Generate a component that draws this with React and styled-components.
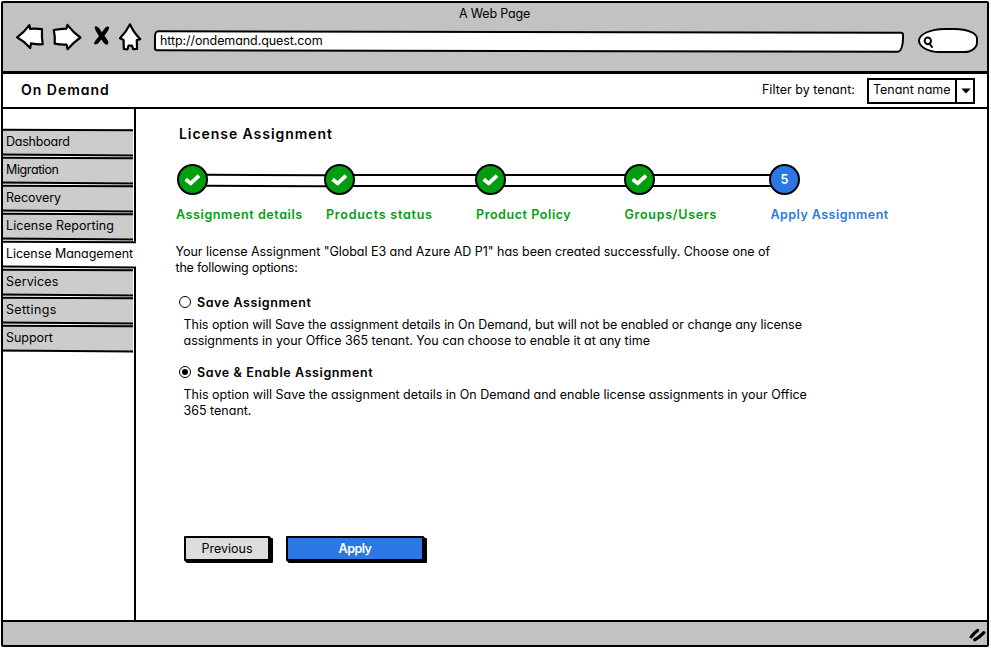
import React, { useState } from "react";
import styled, { createGlobalStyle } from "styled-components";

const GREEN = "#009e0f";
const BLUE = "#2b78e4";
const INK = "#000";

const GlobalStyle = createGlobalStyle`
  *, *::before, *::after { box-sizing: border-box; }
  body { margin: 0; background: #fff; }
  button { font: inherit; color: inherit; letter-spacing: inherit; }
`;

const Page = styled.div`
  width: 991px;
  height: 648px;
  padding: 1px 2px 1px 1px;
  overflow: hidden;
  background: #fff;
  color: ${INK};
  font: 400 12.5px/16px Inter, "Noto Sans", sans-serif;
  font-feature-settings: "cv11" 1;
`;

const BrowserWindow = styled.div`
  display: flex;
  flex-direction: column;
  height: 646px;
  border: 2px solid ${INK};
  border-radius: 2px;
`;

const Text = styled.span`
  display: block;
  white-space: nowrap;
  letter-spacing: ${(p) => p.$ls || 0}px;
`;

/* Browser chrome */
const Chrome = styled.header`
  height: 71px;
  border-bottom: 3px solid ${INK};
  background: #c2c2c2;
`;

const WindowTitle = styled(Text)`
  padding: 3px 0 0 456px;
`;

const ChromeRow = styled.div`
  display: flex;
  align-items: flex-start;
  padding-left: 12px;
`;

const IconButton = styled.button`
  flex: none;
  height: 30px;
  margin: 0 ${(p) => p.$gap}px 0 0;
  padding: 0;
  border: 0;
  background: none;

  svg { display: block; }
`;

const AddressBar = styled.div`
  position: relative;
  width: 750px;
  height: 21px;
  margin: 9px 14px 0 0;
  padding: 2px 0 0 6px;

  &::before {
    content: "";
    position: absolute;
    inset: 0;
    border: 2px solid ${INK};
    border-radius: 4px 3px 6px 3px / 6px 3px 14px 3px;
    background: #fff;
    transform: rotate(0.1deg);
  }

  span { position: relative; }
`;

const SearchBox = styled.div`
  width: 60px;
  height: 25px;
  margin-top: 6px;
  padding: 6px 0 0 3px;
  border: 2px solid ${INK};
  border-radius: 28px 24px 14px 22px / 13px 11px 11px 13px;
  background: #fff;

  svg { display: block; }
`;

/* Application header */
const AppHeader = styled.div`
  display: flex;
  align-items: center;
  height: 33px;
  padding: 0 12px 0 18px;
`;

const Brand = styled(Text)`
  flex: 1;
  font-size: 14px;
  font-weight: 600;
  padding-bottom: 2px;
`;

const FilterLabel = styled(Text)`
  margin-right: 12px;
  padding-bottom: 2px;
`;

const Select = styled.div`
  display: flex;
  width: 108px;
  height: 26px;
  border: 2px solid ${INK};
  background: #fff;
`;

const SelectValue = styled(Text)`
  width: 88px;
  padding: 2px 0 0 4px;
  border-right: 2px solid ${INK};
`;

const Caret = styled.svg`
  display: block;
  margin: 8px 0 0 4px;
`;

/* Main area */
const Main = styled.div`
  display: flex;
  height: 513px;
  border-top: 2px solid ${INK};
`;

const Sidebar = styled.nav`
  display: flex;
  flex-direction: column;
  gap: 1px;
  width: 133px;
  padding-top: 20px;
  border-right: 2px solid ${INK};
`;

const NavItem = styled.a`
  display: block;
  flex: none;
  height: 27px;
  margin-right: ${(p) => (p.$active ? -2 : 1)}px;
  background: ${(p) => (p.$active ? "#fff" : "#cccccc")};

  &::before, &::after {
    content: "";
    display: block;
    height: 2px;
    background: ${INK};
    transform: skewY(0.25deg);
  }
  &::after { transform: skewY(0.5deg); }
`;

const NavLabel = styled(Text)`
  height: 23px;
  padding: 3px 0 0 3px;
`;

const Content = styled.main`
  flex: 1;
  padding: 17px 0 0 40px;
`;

const Heading = styled(Text)`
  margin-left: 3px;
  font-size: 14px;
  font-weight: 600;
`;

const Stepper = styled.ol`
  display: grid;
  grid-template-columns: 147px 151px 149px 145px 130px;
  margin: 22px 0 0 1px;
  padding: 0;
  list-style: none;
`;

const StepTop = styled.div`
  display: flex;
  height: 31px;
`;

const StepCircle = styled.div`
  display: grid;
  place-items: center;
  z-index: 1;
  flex: none;
  width: 31px;
  height: 31px;
  border: 2px solid ${INK};
  border-radius: 50%;
  background: ${(p) => (p.$current ? BLUE : GREEN)};
  color: #fff;
  font-weight: 600;
`;

const Track = styled.div`
  flex: 1;
  height: 13px;
  margin: 10px -2px 0 -2px;
  border: solid ${INK};
  border-width: 2px 0;
  transform: rotate(${(p) => p.$tilt}deg);
`;

const StepLabel = styled(Text)`
  margin: 12px 0 0 ${(p) => p.$shift}px;
  font-weight: 600;
  color: ${(p) => (p.$current ? BLUE : GREEN)};
`;

const Message = styled.div`
  margin: 21px 0 0 -0.5px;
`;

const Option = styled.div`
  margin-top: ${(p) => p.$top}px;
`;

const OptionHead = styled.label`
  display: flex;
  align-items: flex-start;
  gap: 6px;
  height: 16px;
  padding-left: 3px;
  font-weight: 600;
`;

const Radio = styled.span`
  display: grid;
  place-items: center;
  width: 12px;
  height: 12px;
  margin-top: 1px;
  border: 1.4px solid ${INK};
  border-radius: 50%;

  &::after {
    content: "";
    width: 6px;
    height: 6px;
    border-radius: 50%;
    background: ${(p) => (p.$checked ? INK : "transparent")};
  }
`;

const OptionBody = styled.div`
  margin: 6px 0 0 7.5px;
`;

const Actions = styled.div`
  display: flex;
  gap: 16px;
  margin: 117px 0 0 8px;
`;

const ActionButton = styled.button`
  display: flex;
  justify-content: center;
  width: ${(p) => p.$width}px;
  height: 25px;
  padding: 3px 0 0;
  border: 2px solid ${INK};
  border-radius: 1px;
  background: ${(p) => (p.$primary ? BLUE : "#dddddd")};
  box-shadow: 1px 1px 0 ${INK}, 2px 2px 0 ${INK}, 3px 2px 0 ${INK};
  color: ${(p) => (p.$primary ? "#fff" : INK)};
  font-weight: ${(p) => (p.$primary ? 600 : 400)};
`;

const StatusBar = styled.footer`
  display: flex;
  justify-content: flex-end;
  height: 25px;
  padding: 6px 0 0 0;
  border-top: 2px solid ${INK};
  background: #c2c2c2;
`;

const sketch = { fill: "#fff", stroke: INK, strokeWidth: 2.2, strokeLinejoin: "round", strokeLinecap: "round" };

const BackIcon = () => (
  <svg width="29" height="30" viewBox="15 22 29 30">
    <path {...sketch} d="M17 37.3Q24 32.5 29.4 25.2L30 28.8Q36 28.2 42 29.2Q41.6 37 42.7 44.2Q37 44.6 31 43.4L30.2 48Q24.5 41.5 17 37.3Z" />
  </svg>
);
const ForwardIcon = () => (
  <svg width="30" height="30" viewBox="52 22 30 30">
    <path {...sketch} d="M53.8 30Q60 28.8 66.4 28.6L67.4 24.8Q73 32.2 80.4 37.5Q73.5 42.5 67.5 49.2L66.5 44.5Q60.5 44.7 54.7 43.6Q55.2 36.5 53.8 30Z" />
  </svg>
);
const StopIcon = () => (
  <svg width="17" height="30" viewBox="93 22 17 30">
    <path d="M95.2 26.2Q97.8 25.8 99.6 28.8L101.8 32.2L105.2 27.8Q107.5 25.5 109.2 27Q109.4 29.5 104.5 35.6L108.2 41.2Q108.8 44.2 106.8 44.8Q104.2 44.6 101.5 39.6L98 43.6Q95.2 45.3 94 43.4Q94.4 41.2 99 36.2L95.6 30.6Q94 27.6 95.2 26.2Z" fill={INK} />
  </svg>
);
const HomeIcon = () => (
  <svg width="24" height="30" viewBox="118 22 24 30">
    <path {...sketch} d="M130 24.3Q126.5 31.5 120 38.3L123.6 40L123.8 49L127.5 49.3L128.5 45.7L132 45.6L133.2 49.2L137 49L136.8 40L140.3 39.2Q133.5 32.5 130 24.3Z" />
  </svg>
);
const SearchIcon = () => (
  <svg width="12" height="12" viewBox="0 0 12 12" fill="none" stroke={INK} strokeWidth="2" strokeLinecap="round">
    <path d="M6.6 2Q3.5 0.8 2 3.2Q1 6.6 3.6 8Q6.5 8.6 7.8 6.2Q8.3 3 6.6 2ZM6.5 7.6L9 11" />
  </svg>
);
const CheckIcon = () => (
  <svg width="17" height="13" viewBox="0 0 17 13" fill="none" stroke="#fff" strokeWidth="3.8">
    <path d="M3.1 7.4L6.7 10.4L13.6 4" strokeLinejoin="round" strokeLinecap="square" />
  </svg>
);
const GripIcon = () => (
  <svg width="18" height="15" viewBox="969 628 18 15" fill="none" stroke={INK} strokeWidth="3.2" strokeLinecap="round">
    <path d="M971.2 636.8Q974 632.8 977.5 630.5M974.8 639.8Q979 637.8 983.8 632.6" />
  </svg>
);

const navItems = [
  { label: "Dashboard", ls: -0.22 },
  { label: "Migration", ls: -0.4 },
  { label: "Recovery", ls: -0.08 },
  { label: "License Reporting", ls: 0.08 },
  { label: "License Management", ls: -0.05, active: true },
  { label: "Services", ls: 0.16 },
  { label: "Settings", ls: 0.34 },
  { label: "Support", ls: -0.05 },
];

const steps = [
  { label: "Assignment details", ls: 0.6, shift: -1, tilt: 0.2 },
  { label: "Products status", ls: 0.76, shift: 2, tilt: 0.1 },
  { label: "Product Policy", ls: 0.58, shift: 1, tilt: -0.1 },
  { label: "Groups/Users", ls: 0.72, shift: 0.5, tilt: 0.05 },
  { label: "Apply Assignment", ls: 0.46, shift: 1.5, current: true },
];

const options = [
  {
    id: "save",
    title: "Save Assignment",
    ls: 0.58,
    top: 19,
    lines: [
      ["This option will Save the assignment details in On Demand, but will not be enabled or change any license", -0.042],
      ["assignments in your Office 365 tenant. You can choose to enable it at any time", -0.01],
    ],
  },
  {
    id: "enable",
    title: "Save & Enable Assignment",
    ls: 0.6,
    top: 16,
    lines: [
      ["This option will Save the assignment details in On Demand and enable license assignments in your Office", -0.005],
      ["365 tenant.", 0],
    ],
  },
];

export default function App() {
  const [selected, setSelected] = useState("enable");
  return (
    <Page>
      <GlobalStyle />
      <BrowserWindow>
        <Chrome>
          <WindowTitle $ls={-0.18}>A Web Page</WindowTitle>
          <ChromeRow>
            <IconButton $gap={8} aria-label="Back"><BackIcon /></IconButton>
            <IconButton $gap={11} aria-label="Forward"><ForwardIcon /></IconButton>
            <IconButton $gap={8} aria-label="Stop"><StopIcon /></IconButton>
            <IconButton $gap={12} aria-label="Home"><HomeIcon /></IconButton>
            <AddressBar><Text $ls={-0.09}>http://ondemand.quest.com</Text></AddressBar>
            <SearchBox><SearchIcon /></SearchBox>
          </ChromeRow>
        </Chrome>
        <AppHeader>
          <Brand $ls={0.98}>On Demand</Brand>
          <FilterLabel $ls={0.04}>Filter by tenant:</FilterLabel>
          <Select>
            <SelectValue $ls={-0.02}>Tenant name</SelectValue>
            <Caret width="10" height="6" viewBox="0 0 10 6"><path d="M0.3 0.5H9.7L5 5.6Z" fill={INK} /></Caret>
          </Select>
        </AppHeader>
        <Main>
          <Sidebar>
            {navItems.map((n) => (
              <NavItem key={n.label} $active={n.active}>
                <NavLabel $ls={n.ls}>{n.label}</NavLabel>
              </NavItem>
            ))}
          </Sidebar>
          <Content>
            <Heading $ls={0.94}>License Assignment</Heading>
            <Stepper>
              {steps.map((s, i) => (
                <li key={s.label}>
                  <StepTop>
                    <StepCircle $current={s.current}>{s.current ? i + 1 : <CheckIcon />}</StepCircle>
                    {!s.current && <Track $tilt={s.tilt} />}
                  </StepTop>
                  <StepLabel $current={s.current} $shift={s.shift} $ls={s.ls}>{s.label}</StepLabel>
                </li>
              ))}
            </Stepper>
            <Message>
              <Text $ls={-0.034}>Your license Assignment "Global E3 and Azure AD P1" has been created successfully. Choose one of</Text>
              <Text $ls={-0.2}>the following options:</Text>
            </Message>
            {options.map((o) => (
              <Option key={o.id} $top={o.top}>
                <OptionHead onClick={() => setSelected(o.id)}>
                  <Radio $checked={selected === o.id} />
                  <Text $ls={o.ls}>{o.title}</Text>
                </OptionHead>
                <OptionBody>
                  {o.lines.map(([line, ls]) => <Text key={line} $ls={ls}>{line}</Text>)}
                </OptionBody>
              </Option>
            ))}
            <Actions>
              <ActionButton $width={86}><Text $ls={0}>Previous</Text></ActionButton>
              <ActionButton $width={138} $primary><Text $ls={-0.5}>Apply</Text></ActionButton>
            </Actions>
          </Content>
        </Main>
        <StatusBar><GripIcon /></StatusBar>
      </BrowserWindow>
    </Page>
  );
}
